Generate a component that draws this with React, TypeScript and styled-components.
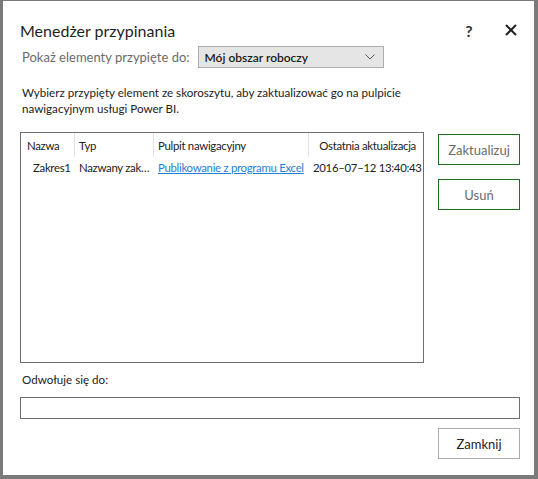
import React from "react";
import styled, { createGlobalStyle } from "styled-components";

const Global = createGlobalStyle`
  html, body { margin: 0; padding: 0; background: #7a7a7a; }
  * { box-sizing: border-box; }
  body { font-family: Lato, "Open Sans", sans-serif; }
`;

const Frame = styled.div`
  width: 538px;
  height: 479px;
  padding: 1px 4px 4px 3px;
  background: #7a7a7a;
`;

const Dialog = styled.div`
  height: 100%;
  background: #ffffff;
  padding: 19px 14px 0 17px;
  display: flex;
  flex-direction: column;
  color: #222;
  font-size: 12px;
`;

const TitleBar = styled.div`
  display: flex;
  align-items: center;
  height: 20px;
`;

const Title = styled.div`
  flex: 1;
  font-size: 16px;
  color: #1f1f1f;
`;

const TitleButton = styled.div<{ $w: number; $gap?: number }>`
  width: ${(p) => p.$w}px;
  margin-left: ${(p) => p.$gap ?? 0}px;
  display: flex;
  justify-content: center;
  font-size: 16px;
  font-weight: 700;
  color: #333;
`;

const ShowRow = styled.div`
  display: flex;
  align-items: center;
  margin-top: 6px;
  padding-left: 2px;
  gap: 8px;
`;

const Label = styled.span`
  font-size: 13px;
  color: #6b6b6b;
`;

const Select = styled.div`
  width: 186px;
  height: 22px;
  background: #e5e5e5;
  border: 1px solid #adadad;
  display: flex;
  align-items: center;
  padding: 0 8px 0 6px;
  font-size: 12px;
  font-weight: 600;
  color: #1a1a1a;
  justify-content: space-between;
`;

const Description = styled.p`
  margin: 17px 0 0 2px;
  line-height: 16px;
  font-size: 11.6px;
  color: #222;
`;

const Middle = styled.div`
  display: flex;
  gap: 14px;
  margin-top: 15px;
`;

const TableBox = styled.div`
  width: 404px;
  height: 231px;
  border: 1px solid #6e6e6e;
`;

const Grid = styled.div`
  display: grid;
  grid-template-columns: 54px 79px 155px 1fr;
  font-size: 11.4px;
  letter-spacing: -0.3px;
`;

const HeadCell = styled.div<{ $right?: boolean; $last?: boolean; $pad?: number }>`
  height: 24px;
  display: flex;
  align-items: center;
  justify-content: ${(p) => (p.$right ? "flex-end" : "flex-start")};
  padding: 0 7px 0 ${(p) => (p.$right ? 0 : p.$pad ?? 4)}px;
  border-right: ${(p) => (p.$last ? "none" : "1px solid #e3e3e3")};
  color: #222;
  white-space: nowrap;
`;

const Cell = styled.div<{ $indent?: number }>`
  height: 21px;
  display: flex;
  align-items: center;
  padding-left: ${(p) => p.$indent ?? 4}px;
  color: #222;
  white-space: nowrap;
  overflow: hidden;
`;

const Link = styled.a`
  color: #1f7ed6;
  text-decoration: underline;
  cursor: pointer;
`;

const Side = styled.div`
  display: flex;
  flex-direction: column;
  gap: 14px;
  margin-top: 2px;
`;

const Button = styled.button<{ $accent?: boolean }>`
  width: 82px;
  height: 31px;
  background: #fff;
  border: 1px solid ${(p) => (p.$accent ? "#1e6e1e" : "#adadad")};
  color: ${(p) => (p.$accent ? "#6b6b6b" : "#222")};
  font-family: inherit;
  font-size: 13px;
  padding: 0;
`;

const RefLabel = styled.div`
  margin-top: 10px;
  padding-left: 2px;
  font-size: 11.6px;
  color: #222;
`;

const Input = styled.div`
  margin-top: 11px;
  height: 22px;
  width: 500px;
  border: 1px solid #6e6e6e;
`;

const Footer = styled.div`
  display: flex;
  justify-content: flex-end;
  margin-top: 9px;
`;

export default function App() {
  return (
    <>
      <Global />
      <Frame>
        <Dialog>
          <TitleBar>
            <Title>Menedżer przypinania</Title>
            <TitleButton $w={20}>?</TitleButton>
            <TitleButton $w={18} $gap={23}>
              <svg width="12" height="12" viewBox="0 0 12 12">
                <path d="M1 1L11 11M11 1L1 11" stroke="#222" strokeWidth="2" />
              </svg>
            </TitleButton>
          </TitleBar>
          <ShowRow>
            <Label>Pokaż elementy przypięte do:</Label>
            <Select>
              <span>Mój obszar roboczy</span>
              <svg width="10" height="6" viewBox="0 0 10 6">
                <path d="M0.5 0.5L5 5L9.5 0.5" stroke="#555" fill="none" strokeWidth="1" />
              </svg>
            </Select>
          </ShowRow>
          <Description>
            Wybierz przypięty element ze skoroszytu, aby zaktualizować go na pulpicie
            <br />
            nawigacyjnym usługi Power BI.
          </Description>
          <Middle>
            <TableBox>
              <Grid>
                <HeadCell $pad={6}>Nazwa</HeadCell>
                <HeadCell>Typ</HeadCell>
                <HeadCell>Pulpit nawigacyjny</HeadCell>
                <HeadCell $right $last>Ostatnia aktualizacja</HeadCell>
                <Cell $indent={12}>Zakres1</Cell>
                <Cell>Nazwany zak…</Cell>
                <Cell>
                  <Link>Publikowanie z programu Excel</Link>
                </Cell>
                <Cell>2016–07–12 13:40:43</Cell>
              </Grid>
            </TableBox>
            <Side>
              <Button $accent>Zaktualizuj</Button>
              <Button $accent>Usuń</Button>
            </Side>
          </Middle>
          <RefLabel>Odwołuje się do:</RefLabel>
          <Input />
          <Footer>
            <Button>Zamknij</Button>
          </Footer>
        </Dialog>
      </Frame>
    </>
  );
}
